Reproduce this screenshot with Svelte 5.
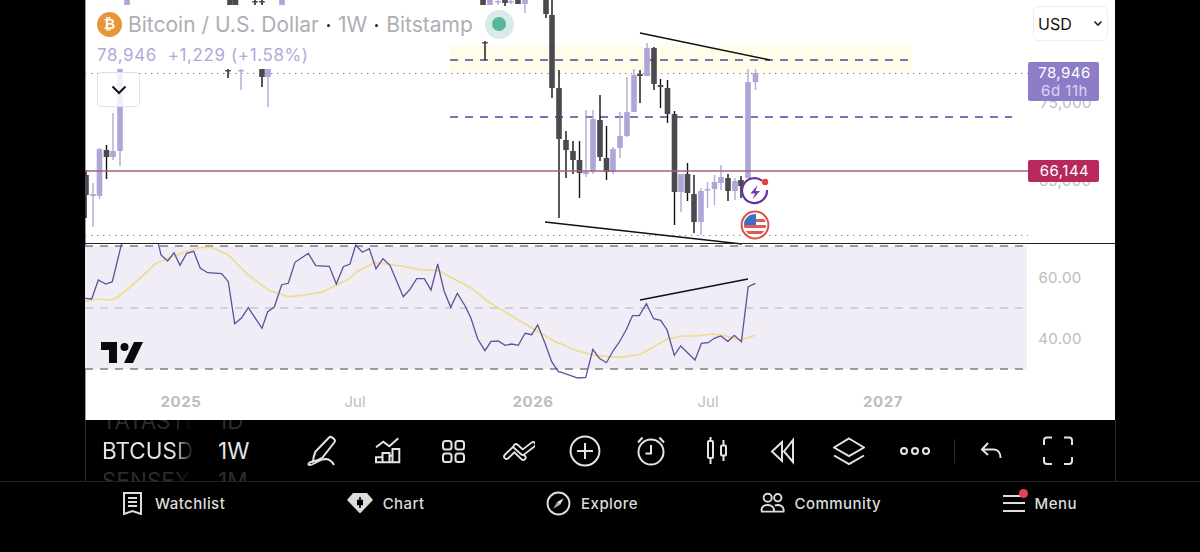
<script>
  // x, wick top, body top, body bottom, wick bottom, up?
  const candles = [
    [86, 170, 175, 195, 218, 0], [93, 183, 194, 196, 227, 1], [99.5, 148, 149, 196, 199, 1],
    [106.5, 145, 150, 157, 179, 0], [113, 113, 151, 157, 160, 1], [120, 69, 69, 151, 166, 1],
    [127, 0, 0, 5, 5, 1], [228, 69, 70, 71, 78, 0], [241, 69, 70, 71, 90, 1],
    [262, 69, 69, 77, 87, 0], [268, 69, 69, 77, 107, 1], [230, 0, 0, 5, 5, 0], [235.5, 0, 0, 5, 5, 0],
    [255, 0, 1, 2, 5, 0], [262, 0, 1, 2, 5, 0], [282, 0, 0, 5, 5, 1], [485, 41, 42, 43, 60, 0],
    [483, 0, 0, 5, 5, 0], [490, 0, 0, 5, 5, 1], [498, 0, 1, 2, 5, 1], [505, 0, 0, 3, 6, 0],
    [511, 0, 1, 2, 4, 1], [518, 0, 0, 4, 4, 0], [525, 0, 0, 4, 13, 1],
    [546, 0, 0, 14, 18, 0], [552, 0, 15, 88, 98, 0], [559, 70, 88, 139, 218, 0],
    [566, 131, 140, 150, 178, 0], [573, 141, 151, 160, 174, 0], [579.5, 141, 160, 173, 198, 0],
    [586, 110, 172, 174, 177, 1], [593, 110, 119, 172, 174, 1], [600, 95, 120, 157, 161, 0],
    [606.5, 126, 158, 172, 180, 0], [613, 147, 149, 172, 174, 1], [620, 112, 136, 148, 158, 1],
    [627, 77, 112, 136, 137, 1], [634, 69, 75, 112, 112, 1], [640, 70, 74, 76, 103, 0],
    [647, 43, 48, 76, 76, 1], [654, 47, 48, 84, 90, 0], [660.5, 79, 85, 87, 108, 0],
    [667.5, 80, 88, 114, 123, 0], [674.5, 111, 114, 192, 225, 0], [681, 174, 174, 192, 212, 1],
    [687.5, 163, 174, 193, 201, 0], [694, 175, 194, 222, 233, 0], [701, 188, 191, 222, 235, 1],
    [707.5, 182, 189, 190, 208, 1], [714.5, 175, 182, 189, 205, 1], [721, 165, 177, 183, 190, 1],
    [728, 174, 178, 191, 201, 0], [735, 178, 181, 191, 200, 1], [741, 176, 180, 186, 198, 0],
    [748, 69, 82, 178, 178, 1], [755.5, 69, 73, 82, 90, 1]
  ];

  const rsiA = [[0,175],[20,177],[40,120],[62,132],[82,125],[110,10],[115,-20],[215,-20],[220,10],[228,45],[248,63],[267,38],[285,76],[305,40],[326,34],[346,85],[368,98],[410,101],[430,125],[449,251],[470,233],[490,203],[531,265],[548,215],[568,201],[590,134],[610,130],[630,67],[670,40],[692,77],[733,79],[754,132],[775,80],[795,72],[812,15],[832,37],[853,26],[873,86],[894,56],[915,76],[955,170],[975,148],[995,116],[1018,116],[1038,150],[1058,72],[1077,152],[1097,202],[1117,160],[1140,197],[1158,235],[1178,297],[1200,332],[1218,304],[1240,303],[1260,316],[1280,312],[1300,316],[1320,280],[1340,284],[1358,255],[1380,310],[1400,365],[1420,395]];
  const rsiB = [[0,396],[50,414],[72,412],[92,328],[110,355],[130,368],[150,330],[165,308],[185,270],[203,227],[222,227],[242,191],[262,236],[282,241],[300,270],[320,346],[338,318],[378,360],[396,310],[415,308],[432,295],[450,288],[470,304],[488,286],[508,305],[527,140],[547,130]];
  const maA = [[0,186],[30,177],[80,180],[100,170],[160,120],[210,72],[250,55],[300,35],[350,22],[380,22],[430,45],[490,105],[550,150],[610,170],[650,166],[710,157],[790,118],[820,92],[870,68],[950,78],[1000,88],[1060,92],[1160,145],[1210,185],[1300,240],[1420,310]];
  const maB = [[0,310],[40,330],[100,347],[170,352],[225,343],[300,298],[340,288],[380,288],[430,282],[470,290],[505,300],[547,286]];

  const toPoints = (a, b) =>
    a.map(([x, y]) => `${(85 + x / 3).toFixed(1)},${(240 + y / 3).toFixed(1)}`)
      .concat(b.map(([x, y]) => `${(560 + x / 2.8).toFixed(1)},${(240 + y / 3).toFixed(1)}`))
      .join(' ');

  const rsiLine = toPoints(rsiA, rsiB);
  const maLine = toPoints(maA, maB);

  const years = [[181, '2025', true], [355, 'Jul', false], [533, '2026', true], [708, 'Jul', false], [883, '2027', true]];
</script>

<div class="screen">
  <div class="chart">
    <svg class="plot" width="1030" height="420" viewBox="85 0 1030 420">
      <defs>
        <clipPath id="rsi-clip"><rect x="85" y="244" width="1030" height="176" /></clipPath>
        <clipPath id="flag-clip"><circle cx="755" cy="225" r="11" /></clipPath>
      </defs>

      <rect x="450" y="46" width="462" height="27" fill="#fffdea" />
      <rect x="85" y="246" width="942" height="123" fill="#f0edf7" />

      <line x1="85" y1="73.5" x2="1028" y2="73.5" class="dots" />
      <line x1="85" y1="235.5" x2="1028" y2="235.5" class="dots" />
      <line x1="450" y1="60" x2="912" y2="60" class="level" />
      <line x1="450" y1="117" x2="1012" y2="117" class="level" />

      {#each candles as [x, wt, bt, bb, wb, up]}
        <line x1={x} y1={wt} x2={x} y2={wb} stroke={up ? '#b3a8da' : '#111'} stroke-width="1.4" />
        <rect x={x - 2.8} y={bt} width="5.6" height={Math.max(bb - bt, 1.5)} fill={up ? '#b0a5d9' : '#4a4a50'} />
      {/each}

      <line x1="85" y1="171" x2="1028" y2="171" stroke="#a4637f" stroke-width="1.6" />

      <line x1="640" y1="33" x2="770" y2="60" class="trend" />
      <line x1="545" y1="222" x2="742" y2="244" class="trend" />
      <line x1="640" y1="300" x2="748" y2="279" class="trend" />

      <line x1="85" y1="243.5" x2="1115" y2="243.5" stroke="#222" stroke-width="1.2" />
      <line x1="85" y1="246" x2="1027" y2="246" class="band" />
      <line x1="85" y1="308" x2="1027" y2="308" class="band mid" />
      <line x1="85" y1="369" x2="1027" y2="369" class="band" />

      <g clip-path="url(#rsi-clip)">
        <polyline points={maLine} fill="none" stroke="#f0dc8f" stroke-width="1.7" />
        <polyline points={rsiLine} fill="none" stroke="#5f5199" stroke-width="1.3" />
      </g>

      <!-- earnings + dividends markers -->
      <circle cx="755" cy="192" r="13.5" fill="#fff" />
      <path d="M762 180.6 A12.5 12.5 0 1 0 767 190" fill="none" stroke="#6a2fa3" stroke-width="2.2" />
      <path d="M757.5 185 L750.5 193.5 H755 L752.5 199.5 L760 191 H755.5 Z" fill="#7b35b5" />
      <circle cx="765" cy="182" r="3.2" fill="#e2403f" />

      <circle cx="755" cy="225" r="14.5" fill="#fff" />
      <circle cx="755" cy="225" r="13.4" fill="none" stroke="#d9534a" stroke-width="2" />
      <g clip-path="url(#flag-clip)">
        <rect x="744" y="214" width="22" height="22" fill="#fff" />
        <rect x="744" y="219" width="22" height="3" fill="#dd5a55" />
        <rect x="744" y="225" width="22" height="3" fill="#dd5a55" />
        <rect x="744" y="231" width="22" height="3" fill="#dd5a55" />
        <rect x="744" y="214" width="12" height="11" fill="#3f6fc4" />
      </g>

      <!-- watermark -->
      <g transform="translate(101 342)" fill="#0a0a0a">
        <path d="M0 0 H16 V21 H8 V8 H0 Z" />
        <circle cx="23.5" cy="5" r="4" />
        <path d="M33 0 H42 L32 21 H23 Z" />
      </g>

      <text x="1066" y="108" class="scale" text-anchor="middle">75,000</text>
      <text x="1065" y="186" class="scale" text-anchor="middle">65,000</text>
      <text x="1060" y="283" class="scale" text-anchor="middle">60.00</text>
      <text x="1060" y="344" class="scale" text-anchor="middle">40.00</text>

      {#each years as [x, label, bold]}
        <text x={x} y="407" class="tick" class:bold text-anchor="middle">{label}</text>
      {/each}
    </svg>

    <div class="legend">
      <div class="title">
        <span class="coin">₿</span>
        <span>Bitcoin / U.S. Dollar</span>
        <i class="sep"></i>
        <span>1W</span>
        <i class="sep"></i>
        <span>Bitstamp</span>
        <span class="status"><b></b></span>
      </div>
      <div class="quote">78,946 &nbsp;+1,229 (+1.58%)</div>
      <button class="collapse" aria-label="Collapse">
        <svg width="18" height="12" viewBox="0 0 18 12"><path d="M2.5 2.5 L9 9 L15.5 2.5" fill="none" stroke="#111" stroke-width="2" /></svg>
      </button>
    </div>

    <button class="currency">
      USD
      <svg width="10" height="7" viewBox="0 0 10 7"><path d="M1.5 1.5 L5 5 L8.5 1.5" fill="none" stroke="#222" stroke-width="1.6" /></svg>
    </button>

    <div class="tag last"><span>78,946</span><span class="countdown">6d 11h</span></div>
    <div class="tag alert">66,144</div>
  </div>

  <div class="toolbar">
    <div class="symbols">
      <div class="row dim"><span class="sym">TATASTE</span><span>1D</span></div>
      <div class="row"><span class="sym">BTCUSD</span><span>1W</span></div>
      <div class="row dim"><span class="sym">SENSEX</span><span>1M</span></div>
    </div>

    <div class="tools">
      <svg viewBox="0 0 32 32"><path d="M24 2.5 Q25.5 1.3 27 2.4 L29.3 4.2 Q30.6 5.5 29.6 7 L17.5 22.5 Q13 25.5 8 26.5 Q8.5 21 10.5 16.5 Z" /><path d="M8 26.5 Q3 27.5 3.5 29.5 Q5 31 10 28 Q16 24 21 24 Q26 24.5 29 30" /></svg>
      <svg viewBox="0 0 32 32"><path d="M5 12.3 L12.3 6.7 L18.3 11.3 L27.3 3.3" /><path d="M5 27.3 V22.3 H11.5 V27.3 Z M11.5 27.3 V18 H18.5 V27.3 Z M18.5 27.3 V20.7 H21.5 V27.3 Z M21.5 27.3 V14 H28.3 V27.3 Z" /></svg>
      <svg viewBox="0 0 32 32"><rect x="6" y="6" width="8.5" height="8.5" rx="2.5" /><rect x="18.5" y="6" width="8.5" height="8.5" rx="2.5" /><rect x="6" y="18.5" width="8.5" height="8.5" rx="2.5" /><rect x="18.5" y="18.5" width="8.5" height="8.5" rx="2.5" /></svg>
      <svg viewBox="0 0 32 32" stroke-linecap="round" stroke-linejoin="round"><path d="M3.5 21.5 L11.3 14 L20.2 22.5" stroke-width="6.6" /><path d="M3.5 21.5 L11.3 14 L20.2 22.5" stroke="#000" stroke-width="3" /><path d="M13 11.5 L19.7 17.5 L30 9.5" stroke-width="6.6" /><path d="M13 11.5 L19.7 17.5 L30 9.5" stroke="#000" stroke-width="3" /></svg>
      <svg viewBox="0 0 32 32"><circle cx="16" cy="16" r="14.4" /><path d="M16 8 V24 M8 16 H24" /></svg>
      <svg viewBox="0 0 32 32"><circle cx="16" cy="17" r="12.5" /><path d="M16 10 V18.5 H10.5 M3 7.5 L7.5 2.5 M29 7.5 L24.5 2.5" /></svg>
      <svg viewBox="0 0 32 32"><rect x="7" y="6" width="5" height="17" rx="1" /><path d="M9.5 2 V6 M9.5 23 V29" /><rect x="20" y="10.5" width="5" height="10" rx="1" /><path d="M22.5 5 V10.5 M22.5 20.5 V26" /></svg>
      <svg viewBox="0 0 32 32"><path d="M15 7 L5 16.5 L15 26 Z M26 5 L17 16.5 L26 27 Z" /></svg>
      <svg viewBox="0 0 32 32"><path d="M16 3.5 L31 12.5 L16 21 L1 12.5 Z M1 20.5 L16 29 L31 20.5" /></svg>
      <svg viewBox="0 0 32 32"><circle cx="5" cy="16" r="3" /><circle cx="16" cy="16" r="3" /><circle cx="27" cy="16" r="3" /></svg>
      <i class="divider"></i>
      <svg viewBox="0 0 32 32"><path d="M12 8 L6 14.5 L12 20 M6 14.5 H18 C22 14.5 24.5 18 24.5 23" /></svg>
      <svg viewBox="0 0 32 32"><path d="M10 2.5 H5 A3 3 0 0 0 2 5.5 V10 M22 2.5 H27 A3 3 0 0 1 30 5.5 V10 M2 22 V26 A3 3 0 0 0 5 29 H10 M30 22 V26 A3 3 0 0 1 27 29 H22" /></svg>
    </div>
  </div>

  <nav class="tabs">
    <div class="tab watchlist">
      <svg viewBox="0 0 19 23" width="19" height="23"><path class="s" d="M1 1 H18 V22 L9.5 19 L1 22 Z" /><path class="s" d="M5 6 H14 M5 10 H14 M5 14 H14" /></svg>
      <span>Watchlist</span>
    </div>
    <div class="tab">
      <svg viewBox="0 0 26 22" width="26" height="22"><path d="M6 1 H20 L26 8 L13 21.5 L0 8 Z" fill="#ddd" /><path d="M13 5 V16 M10.8 8.5 H15.2 V12.5 H10.8 Z" stroke="#000" stroke-width="1.6" fill="#000" /></svg>
      <span>Chart</span>
    </div>
    <div class="tab">
      <svg viewBox="0 0 26 26" width="25" height="25"><circle class="s" cx="13" cy="13" r="11.4" /><path d="M18.5 7.5 L14.5 14.5 L11.5 11.5 Z" fill="#ddd" /><path d="M7.5 18.5 L11.5 11.5 L14.5 14.5 Z" fill="#ddd" opacity=".75" /></svg>
      <span>Explore</span>
    </div>
    <div class="tab">
      <svg viewBox="0 0 26 24" width="25" height="24"><circle class="s" cx="8" cy="6.5" r="4.2" /><circle class="s" cx="18.5" cy="6.5" r="3.8" /><path class="s" d="M2 21 C0.5 16.5 4 14 8 14 C12 14 15 16.5 14.5 21 Z M15.5 14.6 C20 13 25.5 15 24.5 21 H15.5" /></svg>
      <span>Community</span>
    </div>
    <div class="tab">
      <span class="burger"><b></b></span>
      <span>Menu</span>
    </div>
  </nav>
</div>

<style>
  :global(body) {
    background: #000;
    font-family: Inter, "Liberation Sans", sans-serif;
  }

  .screen {
    width: 1200px;
    height: 552px;
    overflow: hidden;
    background: #000;
    display: flex;
    flex-direction: column;
  }

  .chart {
    position: relative;
    flex: none;
    width: 1030px;
    height: 420px;
    margin-left: 85px;
    background: #fff;
    box-shadow: inset 1px 0 0 #999;
  }

  .plot {
    display: block;
  }

  .dots {
    stroke: #8d8d8d;
    stroke-width: 1;
    stroke-dasharray: 1.5 4.5;
  }

  .level {
    stroke: #5d3ea3;
    stroke-width: 1.5;
    stroke-dasharray: 8 7;
  }

  .trend {
    stroke: #111;
    stroke-width: 1.5;
  }

  .band {
    stroke: #7e7e85;
    stroke-width: 1.4;
    stroke-dasharray: 8 7;
  }

  .band.mid {
    stroke: #b4b2ba;
    stroke-width: 1;
  }

  .scale {
    font-size: 15px;
    fill: #bcbcbc;
    letter-spacing: 0.4px;
  }

  .tick {
    font-size: 15px;
    fill: #bdbdbd;
  }

  .tick.bold {
    font-weight: 700;
    letter-spacing: 0.6px;
  }

  .legend {
    position: absolute;
    left: 12px;
    top: 11px;
  }

  .title {
    display: flex;
    align-items: center;
    height: 26px;
    font-size: 21px;
    color: #aeaeb4;
    white-space: nowrap;
  }

  .coin {
    width: 25px;
    height: 25px;
    border-radius: 50%;
    background: #e9963a;
    color: #fff;
    font-size: 14px;
    font-weight: 700;
    font-family: "DejaVu Sans", sans-serif;
    display: flex;
    align-items: center;
    justify-content: center;
    margin-right: 6px;
  }

  .sep {
    width: 3px;
    height: 3px;
    border-radius: 50%;
    background: #222;
    margin: 2px 8px 0 8px;
  }

  .status {
    width: 29px;
    height: 29px;
    margin-left: 12px;
    border-radius: 50%;
    background: #d9ebe7;
    display: flex;
    align-items: center;
    justify-content: center;
  }

  .status b {
    width: 14px;
    height: 14px;
    border-radius: 50%;
    background: #55b69d;
  }

  .quote {
    margin-top: 7px;
    font-size: 17px;
    line-height: 22px;
    color: #b3a9d6;
    letter-spacing: 0.6px;
  }

  .collapse {
    display: flex;
    align-items: center;
    justify-content: center;
    width: 43px;
    height: 35px;
    margin-top: 6px;
    padding: 0;
    background: rgba(255, 255, 255, 0.82);
    border: 1px solid #e2e2e6;
    border-radius: 4px;
  }

  .currency {
    position: absolute;
    left: 948px;
    top: 6px;
    width: 75px;
    height: 35px;
    padding: 0 4px;
    display: flex;
    align-items: center;
    justify-content: space-between;
    background: #fff;
    border: 1px solid #eeeef0;
    border-radius: 5px;
    font: 16px Inter, "Liberation Sans", sans-serif;
    color: #111;
  }

  .tag {
    position: absolute;
    left: 943px;
    width: 71px;
    box-sizing: border-box;
    border-radius: 2px;
    color: #fff;
    font-size: 15px;
    letter-spacing: 0.5px;
    text-align: center;
    padding-left: 2px;
  }

  .tag.last {
    top: 62px;
    height: 39px;
    background: #8d7dc8;
    display: flex;
    flex-direction: column;
    justify-content: center;
    line-height: 18px;
  }

  .countdown {
    color: #dcd5f2;
  }

  .tag.alert {
    top: 160px;
    height: 22px;
    line-height: 22px;
    background: #b8285c;
  }

  .toolbar {
    flex: none;
    box-sizing: border-box;
    width: 1031px;
    height: 61px;
    margin-left: 85px;
    border-left: 1px solid #2c2c2c;
    border-right: 1px solid #2c2c2c;
    display: flex;
    align-items: center;
    overflow: hidden;
  }

  .symbols {
    flex: none;
    width: 202px;
    padding-left: 16px;
    box-sizing: border-box;
    display: flex;
    flex-direction: column;
    justify-content: center;
    height: 90px;
    font-size: 22.5px;
    color: #e4e4e4;
  }

  .row {
    display: flex;
    height: 30px;
    line-height: 30px;
  }

  .row.dim {
    color: #2c2c2c;
  }

  .sym {
    width: 92px;
    margin-right: 24px;
    overflow: hidden;
    white-space: nowrap;
    -webkit-mask-image: linear-gradient(to right, #000 78%, transparent 100%);
    mask-image: linear-gradient(to right, #000 78%, transparent 100%);
  }

  .tools {
    display: flex;
    align-items: center;
  }

  .tools svg {
    flex: none;
    width: 32px;
    height: 32px;
    padding: 0 17px;
    fill: none;
    stroke: #e4e4e4;
    stroke-width: 2;
  }

  .divider {
    width: 1px;
    height: 24px;
    margin: 0 4px 0 6px;
    background: #2b2b2b;
  }

  .tabs {
    flex: none;
    box-sizing: border-box;
    height: 71px;
    border-top: 1px solid #222;
    padding: 7px 123px 0 123px;
    display: flex;
    justify-content: space-between;
    align-items: flex-start;
  }

  .tab {
    display: flex;
    align-items: center;
    gap: 10px;
    height: 28px;
    font-size: 15px;
    font-weight: 500;
    color: #dcdcdc;
    letter-spacing: 0.45px;
  }

  .tab.watchlist {
    gap: 13px;
  }

  .tab svg {
    flex: none;
  }

  .s {
    fill: none;
    stroke: #ddd;
    stroke-width: 2;
  }

  .burger {
    position: relative;
    width: 22px;
    height: 17px;
    border-top: 2px solid #ddd;
    border-bottom: 2px solid #ddd;
    box-sizing: border-box;
    background: linear-gradient(#ddd, #ddd) center / 100% 2px no-repeat;
  }

  .burger b {
    position: absolute;
    top: -8px;
    right: -3px;
    width: 9px;
    height: 9px;
    border-radius: 50%;
    background: #e4405a;
  }
</style>
